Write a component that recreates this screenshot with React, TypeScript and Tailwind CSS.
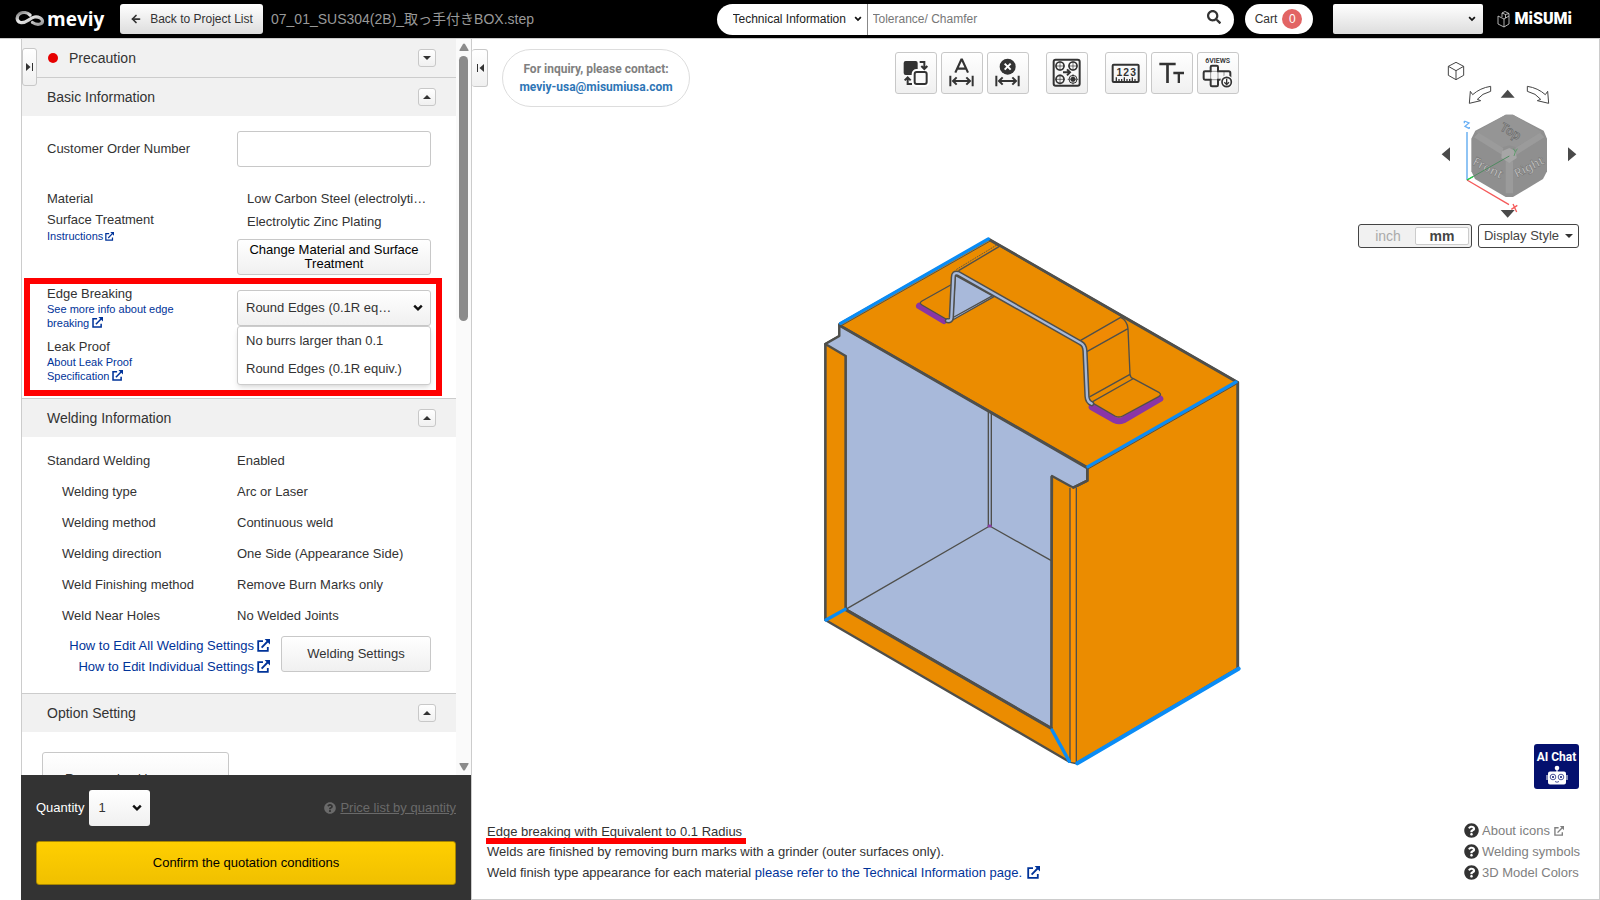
import React, { useState } from "react";
import { FaSearch, FaQuestionCircle } from "react-icons/fa";
import { ArrowLeft } from "lucide-react";

const FONT = "font-['Liberation_Sans','Noto_Sans_CJK_JP',sans-serif]";
const SOFT = "bg-linear-to-b from-white to-[#f0f0f0] border border-[#c8c8c8] rounded-[3px]";

function External({ className }: { className: string }) {
  return (
    <svg viewBox="0 0 13 13" className={className} fill="none" stroke="currentColor" strokeWidth="1.8" aria-hidden="true">
      <path d="M6 2.2H1.2v9.6h9.6V8" />
      <path d="M4.6 8.6L11 2" />
      <path d="M7.6 0H13v5.4z" fill="currentColor" stroke="none" />
    </svg>
  );
}

function Chevron({ className }: { className: string }) {
  return (
    <svg viewBox="0 0 10 8" className={className} fill="none" stroke="#111" strokeWidth="2.4" aria-hidden="true">
      <path d="M1.2 1.6L5 5.4l3.8-3.8" />
    </svg>
  );
}

function Triangle({ down }: { down?: boolean }) {
  return (
    <svg viewBox="0 0 8 4" className="h-1 w-2" fill="#333" aria-hidden="true">
      <path d={down ? "M0 0h8L4 4z" : "M0 4h8L4 0z"} />
    </svg>
  );
}

function SectionHeader({ title, open, alert, first }: { title: string; open: boolean; alert?: boolean; first?: boolean }) {
  return (
    <div className={`flex shrink-0 items-center bg-[#f1f1f1] pr-5 pl-[25px] ${first ? "h-[38px]" : "h-[39px] border-t border-[#ccc]"}`}>
      {alert && <span className="mr-[11px] ml-px size-[10px] rounded-full bg-[#e60000]" />}
      <h2 className="flex-1 text-[14px] leading-5">{title}</h2>
      <button aria-label={`Toggle ${title}`} className={`flex size-[18px] items-center justify-center ${SOFT} border-[#aaa]`}>
        <Triangle down={!open} />
      </button>
    </div>
  );
}

const DIM = (
  <g>
    <path d="M28 71v32M95 71v32" strokeWidth="6" />
    <path d="M36 87h51M47 76L36 87l11 11M76 76l11 11-11 11" strokeWidth="6" />
  </g>
);

const TOOLS: { name: string; gap?: boolean; icon: React.ReactNode }[] = [
  {
    name: "Swap faces",
    icon: (
      <g>
        <rect x="26" y="27" width="42" height="42" rx="6" fill="#333" stroke="none" />
        <rect x="57" y="58" width="40" height="40" rx="8" stroke="#fff" strokeWidth="14" fill="#fff" />
        <rect x="59" y="60" width="36" height="36" rx="6" fill="#fafafa" strokeWidth="6" />
        <path d="M74 30h14v20M79 42l9 9 9-9M51 96H38V76M29 85l9-9 9 9" strokeWidth="6" />
      </g>
    ),
  },
  { name: "Dimension", icon: <g><path d="M43 62L61 23h2l18 39M49 50h26" strokeWidth="6.500" />{DIM}</g> },
  {
    name: "Delete dimension",
    icon: (
      <g>
        <circle cx="62" cy="44" r="24" fill="#333" stroke="none" />
        <path d="M53 35l18 18M71 35L53 53" stroke="#fff" strokeWidth="6" />
        {DIM}
      </g>
    ),
  },
  {
    name: "Hole groups",
    gap: true,
    icon: (
      <g>
        <rect x="23" y="23" width="78" height="78" rx="6" strokeWidth="6" />
        <g strokeWidth="5">
          <circle cx="42" cy="42" r="12" /><circle cx="81" cy="42" r="12" /><circle cx="42" cy="82" r="12" />
          <circle cx="81" cy="82" r="12" strokeWidth="3" /><circle cx="81" cy="82" r="5" fill="#333" />
        </g>
        <path d="M42 27v30M27 42h30M81 27v30M66 42h30M42 67v30M27 82h30M81 66v32M65 82h32" strokeWidth="2" />
        <path d="M51 61h20M63 52l9 9-9 9" strokeWidth="6" />
      </g>
    ),
  },
  {
    name: "Measure",
    gap: true,
    icon: (
      <g>
        <rect x="23" y="38" width="78" height="52" rx="3" strokeWidth="6" />
        <path d="M34 89V76M42 89v-8M50 89v-8M58 89V76M66 89v-8M74 89v-8M82 89V76M90 89v-8" strokeWidth="4" />
        <g fontSize="31" fontWeight="700" fill="#333" stroke="none" textAnchor="middle" className="font-['Liberation_Sans']">
          <text x="43" y="72">1</text><text x="63" y="72">2</text><text x="84" y="72">3</text>
        </g>
      </g>
    ),
  },
  { name: "Text size", icon: <g><path d="M25 36h49M49.500 36v57" strokeWidth="8" /><path d="M67 63h32M83.500 63v30" strokeWidth="7" /></g> },
  {
    name: "Six views",
    icon: (
      <g>
        <text x="62" y="32" textAnchor="middle" fontSize="21" fontWeight="600" fill="#333" stroke="none" className="font-['Roboto']">6VIEWS</text>
        <path d="M45 41h14q4 0 4 4v13h32q5 0 5 5v16q0 4-5 4H63v16q0 4-4 4H45q-4 0-4-4V83H24q-4 0-4-4V62q0-4 4-4h17V45q0-4 4-4z" strokeWidth="6" />
        <path d="M41 58h22v25H41zM81 58v25" strokeWidth="1.500" />
        <circle cx="89" cy="90" r="20" fill="#fafafa" stroke="none" />
        <circle cx="89" cy="90" r="14" strokeWidth="5" />
        <path d="M89 80v17M82 91l7 7 7-7" strokeWidth="4" />
      </g>
    ),
  },
];

function Header() {
  return (
    <header className="flex h-[38px] shrink-0 items-center bg-black pr-7 pl-[15px]">
      <a href="#" aria-label="meviy home" className="flex w-[105px] items-center gap-[2px] text-white">
        <svg viewBox="0 0 30 16" className="h-4 w-[30px]" fill="none" aria-hidden="true">
          <defs>
            <linearGradient id="loop" x1="0" y1="0" x2="1" y2="1">
              <stop offset="0" stopColor="#777" /><stop offset=".4" stopColor="#eee" /><stop offset="1" stopColor="#999" />
            </linearGradient>
          </defs>
          <path d="M15 4C12 1 7.500.8 4.500 2.800c-3.500 2.700-3 7.700 1 8.700 5.500 1.300 9-4.500 14-5.500 4-.6 8 1.500 8 4.500-.2 3-5.500 4-10 1" stroke="url(#loop)" strokeWidth="3.200" strokeLinecap="round" />
        </svg>
        <span className="font-['Open_Sans',sans-serif] text-[19px] leading-6 font-bold">meviy</span>
      </a>
      <button className="flex h-[30px] w-[143px] items-center justify-center gap-2 rounded-[3px] bg-linear-to-b from-white to-[#ddd] text-[12px] text-[#333]">
        <ArrowLeft className="size-3" strokeWidth={3.500} />
        Back to Project List
      </button>
      <h1 className="ml-2 flex-1 text-[14px] leading-5 whitespace-nowrap text-[#999]">07_01_SUS304(2B)_取っ手付きBOX.step</h1>
      <form className="flex h-[31px] w-[517px] overflow-hidden rounded-full bg-white text-[12px]" onSubmit={(e) => e.preventDefault()}>
        <label className="relative flex w-[151px] items-center border-r border-[#888]">
          <select aria-label="Search category" className="size-full appearance-none pl-4 text-[#222]">
            <option>Technical Information</option>
          </select>
          <Chevron className="pointer-events-none absolute right-[5px] h-[6px] w-2" />
        </label>
        <input aria-label="Search" placeholder="Tolerance/ Chamfer" className="min-w-0 flex-1 pl-[5px] placeholder:text-[#777]" />
        <button aria-label="Search" className="flex w-10 items-center justify-center pb-1"><FaSearch className="size-[14px] text-[#333]" /></button>
      </form>
      <button className="ml-[11px] flex h-[30px] w-[68px] items-center justify-center gap-[5px] rounded-full bg-white text-[12px]">
        Cart <span className="flex size-5 items-center justify-center rounded-full bg-[#e26464] text-white">0</span>
      </button>
      <label className="relative ml-5 flex h-[30px] w-[150px] items-center">
        <select aria-label="Account" className="size-full appearance-none rounded-[2px] bg-linear-to-b from-white to-[#ddd]"><option></option></select>
        <Chevron className="pointer-events-none absolute right-[7px] h-[6px] w-2" />
      </label>
      <a href="#" aria-label="MISUMI" className="ml-[14px] flex items-center gap-1 text-white">
        <svg viewBox="0 0 14 17" className="h-[17px] w-[14px]" fill="none" stroke="#ddd" aria-hidden="true">
          <path d="M1 5l6 3v8l-6-3zM7 8l5-3v8l-5 3M5 6V2l3-1.500 4 2V5M5 2l3.500 1.500L12 2.500M8.500 3.500V7" strokeWidth=".8" />
        </svg>
        <span className="font-['Roboto',sans-serif] text-[16px] leading-5 font-black">MiSUMi</span>
      </a>
    </header>
  );
}

const WELDING = [
  ["Welding type", "Arc or Laser"],
  ["Welding method", "Continuous weld"],
  ["Welding direction", "One Side (Appearance Side)"],
  ["Weld Finishing method", "Remove Burn Marks only"],
  ["Weld Near Holes", "No Welded Joints"],
];

const EDGES = [
  { label: "No burrs larger than 0.1", short: "No burrs larger than 0.1" },
  { label: "Round Edges (0.1R equiv.)", short: "Round Edges (0.1R eq…" },
];

function Sidebar() {
  const [edge, setEdge] = useState(1);
  return (
    <aside className="relative ml-[21px] flex w-[450px] shrink-0 flex-col border-l border-[#ccc]">
      <button aria-label="Expand panel" className={`absolute top-[9px] left-0 z-10 flex h-[38px] w-[15px] items-center justify-center ${SOFT}`}>
        <svg viewBox="0 0 8 10" className="h-[10px] w-2" fill="#333" aria-hidden="true"><path d="M0 1v8l4.500-4zM6 1h1v8H6z" /></svg>
      </button>
      <div className="flex min-h-0 flex-1">
        <div className="flex min-w-0 flex-1 flex-col overflow-hidden text-[13px]">
          <SectionHeader title="Precaution" open={false} alert first />
          <SectionHeader title="Basic Information" open />
          <div className="pt-[15px] pb-[2px]">
            <div className="flex items-center pr-[25px] pl-[25px]">
              <label htmlFor="order" className="w-[190px]">Customer Order Number</label>
              <input id="order" className="h-9 w-[194px] rounded-[3px] border border-[#c8c8c8] px-2" />
            </div>
            <div className="mt-[22px] flex px-[25px] leading-5">
              <div className="w-[190px]">
                <p>Material</p>
                <p className="mt-px">Surface Treatment</p>
                <a href="#" className="flex items-center gap-[2px] text-[11px] leading-3 text-[#003399]">Instructions <External className="size-[9px]" /></a>
              </div>
              <div className="w-[194px]">
                <p className="pl-[10px] whitespace-nowrap">Low Carbon Steel (electrolyti…</p>
                <p className="mt-[3px] pl-[10px]">Electrolytic Zinc Plating</p>
                <button className={`mt-[7px] h-9 w-full px-2 leading-[14px] text-black ${SOFT}`}>Change Material and Surface Treatment</button>
              </div>
            </div>
            <div className="mt-[3px] ml-[2px] flex h-[118px] w-[418px] border-[6px] border-[#ff0000] pl-[17px]">
              <div className="w-[190px] pt-[2px] leading-4">
                <p id="edge-label">Edge Breaking</p>
                <a href="#" className="block w-[132px] text-[11px] leading-[14px] text-[#003399]">See more info about edge breaking <External className="inline-block size-[11px] align-[-1px]" /></a>
                <p className="mt-[9px]">Leak Proof</p>
                <a href="#" className="block w-[100px] text-[11px] leading-[14px] text-[#003399]">About Leak Proof Specification <External className="inline-block size-[11px] align-[-1px]" /></a>
              </div>
              <div className="relative w-[194px] pt-[6px]">
                <button aria-haspopup="listbox" aria-expanded="true" aria-labelledby="edge-label" className={`flex h-9 w-full items-center justify-between pr-[7px] pl-2 ${SOFT}`}>
                  <span className="whitespace-nowrap">{EDGES[edge].short}</span>
                  <Chevron className="h-2 w-[10px]" />
                </button>
                <ul role="listbox" className="absolute top-[42px] left-0 z-10 w-full rounded-[3px] border border-[#ccc] bg-white pt-px shadow-md">
                  {EDGES.map((o, i) => (
                    <li key={o.label} role="option" aria-selected={i === edge} onClick={() => setEdge(i)} className="h-7 pl-2 leading-[26px]">{o.label}</li>
                  ))}
                </ul>
              </div>
            </div>
          </div>
          <SectionHeader title="Welding Information" open />
          <div className="shrink-0 px-[25px] pt-2 pb-4">
            <dl className="grid grid-cols-[190px_1fr] leading-[31px]">
              <dt>Standard Welding</dt>
              <dd>Enabled</dd>
              {WELDING.map(([k, v]) => (
                <React.Fragment key={k}>
                  <dt className="pl-[15px]">{k}</dt>
                  <dd>{v}</dd>
                </React.Fragment>
              ))}
            </dl>
            <div className="mt-1 flex gap-[11px]">
              <div className="flex flex-1 flex-col items-end leading-[21px] text-[#003399]">
                <a href="#" className="flex items-center gap-[3px]">How to Edit All Welding Settings <External className="size-[13px]" /></a>
                <a href="#" className="flex items-center gap-[3px]">How to Edit Individual Settings <External className="size-[13px]" /></a>
              </div>
              <button className={`mt-px h-9 w-[150px] ${SOFT}`}>Welding Settings</button>
            </div>
          </div>
          <SectionHeader title="Option Setting" open />
          <div className="shrink-0 px-5 pt-5">
            <button className={`h-[54px] w-[187px] pl-[22px] text-left ${SOFT}`}>Remove backing</button>
          </div>
        </div>
        <div className="flex w-[15px] flex-col items-center bg-[#fafafa] pt-1 pb-1">
          <svg viewBox="0 0 10 8" className="h-2 w-[10px]" fill="#8b8b8b" aria-hidden="true"><path d="M1 8h8q1 0 .5-1L6 1Q5 0 4 1L.5 7Q0 8 1 8z" /></svg>
          <div className="mt-[5px] h-[265px] w-[9px] rounded-full bg-[#8b8b8b]" />
          <svg viewBox="0 0 10 8" className="mt-auto h-2 w-[10px]" fill="#8b8b8b" aria-hidden="true"><path d="M1 0h8q1 0 .5 1L6 7Q5 8 4 7L.5 1Q0 0 1 0z" /></svg>
        </div>
      </div>
      <div className="-ml-px shrink-0 bg-[#333] px-[15px] pt-[15px] pb-[15px] text-[13px]">
        <div className="flex items-center">
          <label htmlFor="qty" className="mr-[5px] text-white">Quantity</label>
          <div className="relative flex h-9 w-[61px] items-center">
            <select id="qty" className="size-full appearance-none rounded-[3px] bg-linear-to-b from-white to-[#f0f0f0] pl-[9px]"><option>1</option></select>
            <Chevron className="pointer-events-none absolute right-2 h-2 w-[10px]" />
          </div>
          <a href="#" className="ml-auto flex items-center gap-1 text-[#6a6a6a]"><FaQuestionCircle className="size-3" /><span className="underline">Price list by quantity</span></a>
        </div>
        <button className="mt-[15px] h-11 w-full rounded-[3px] border border-[#a88700] bg-linear-to-b from-[#ffcf00] to-[#f0c000] text-black">Confirm the quotation conditions</button>
      </div>
    </aside>
  );
}

function Model() {
  return (
    <svg viewBox="472 39 1127 860" className="absolute inset-0 size-full" fill="none" role="img" aria-label="3D model of a box with a handle">
      <g transform="translate(800 220) scale(.33333)" stroke="#4f4f4b" strokeLinejoin="round" strokeLinecap="round">
        <path d="M567 57L118 312v36l-42 24v828l732 425 22 5 484-285V487z" fill="#eb8c00" strokeWidth="7" />
        <path d="M118 315l744 427v40l-42 21-64-35-2 757-617-357V408l-61-36 42-24z" fill="#a8b9da" strokeWidth="7" />
        <path d="M810 803h19v825l-19-3z" fill="#fb9304" stroke="none" />
        <path d="M810 805v820M829 805v823" strokeWidth="4" />
        <path d="M565 573v345M574 578v340M569 918L137 1168M569 918l185 104" strokeWidth="4" />
        <path d="M820 803l42-21v-40" strokeWidth="8" />
        <path d="M567 918h4" stroke="#8a3fa0" strokeWidth="9" />
        <path d="M118 316L862 744M567 59L1312 487" strokeWidth="8" />
        <path d="M137 1169l617 356" strokeWidth="9" />
        <path d="M76 372v828M137 408v760M754 770v755M1312 487v858" strokeWidth="6" />
        <g stroke="#0a8cf5" strokeWidth="10">
          <path d="M122 310L565 57M864 740L1308 486M78 1200l57-32M756 1530l52 94" />
          <path d="M832 1630l484-284" strokeWidth="12" />
        </g>
        <path d="M124 317L569 64M866 746L1310 492" strokeWidth="3" />
        <path d="M358 258l74 44" stroke="#8a35a6" strokeWidth="20" />
        <path d="M452 195l-86 48q-10 6 0 12l72 42V195z" fill="#eb8c00" stroke="none" />
        <path d="M452 195l-86 48q-10 6 0 12l72 42" strokeWidth="4" />
        <path d="M480 155l117-75 365 212q20 10 22 34l6 137q2 12 10 15l78 42q12 7-2 14l-108 58q-11 6-23 0l-65-38-14-170-24-24z" fill="#eb8c00" stroke="none" />
        <path d="M842 361l120-69q20 10 22 34l-122 68z" fill="#f08a04" stroke="none" />
        <path d="M876 561l69 39q12 6 25 0l110-64" stroke="#8a35a6" strokeWidth="20" />
        <path d="M876 548l69 40q12 6 23 0l108-58 2-12-78-42-122 68z" fill="#eb8c00" stroke="none" />
        <path d="M876 548l69 40q12 6 23 0l108-58q10-6 2-12l-78-42q-9-3-10-13l-6-137q-2-24-22-34M842 361l120-69M862 394l122-68M870 530l120-67M878 545l120-68" strokeWidth="4" />
        <path d="M477 151l120-71" strokeWidth="4" />
        <path d="M470 148l122-74" strokeWidth="2.500" strokeDasharray="3 5" />
        <path d="M466 166l116 64-124 70z" fill="#a8b9da" strokeWidth="4" />
        <path d="M462 291l112-62" strokeWidth="4" />
        <path d="M442 302q11 2 12-8l6-122q0-16 14-12l368 209q12 6 13 24l6 136q1 16 14 22" strokeWidth="16" />
        <path d="M442 302q11 2 12-8l6-122q0-16 14-12l368 209q12 6 13 24l6 136q1 16 14 22" stroke="#a8b9da" strokeWidth="7" />
      </g>
    </svg>
  );
}

function ViewCube() {
  return (
    <svg viewBox="285 24 432 492" className="h-[164px] w-[144px]" fill="none" role="img" aria-label="View orientation cube">
      <g stroke="#444" strokeWidth="3" strokeLinejoin="round">
        <path d="M348 37l23 12v27l-23 13-23-13V49zM325 49l23 13 23-13M348 62v27" />
        <path d="M452 109v15q-26 6-40 24l10 4-34 8 3-36 7 10q22-20 54-25zM562 109v15q26 6 40 24l-10 4 34 8-3-36-7 10q-22-20-54-25z" />
      </g>
      <path d="M482 143h42l-21-24zM482 480h42l-21 23zM330 292v42l-25-21zM684 292v42l25-21z" fill="#4a4a4a" />
      <path d="M497 194h22l92 48 10 24v98l-12 23-90 54h-22l-92-54-11-23v-98l12-24z" fill="#8f8f8f" />
      <path d="M497 194h22l87 52-78 46-20-6-22 6-78-46z" fill="#959595" />
      <path d="M402 262l14-14 74 46-4 20zM613 262l-13-14-74 46 4 20zM497 334h22v96h-22z" fill="#9b9b9b" />
      <path d="M508 294l20 10 2 20-22 15-24-15 2-20z" fill="#a6a6a6" />
      <g className="font-['Noto_Sans']" fontSize="37" fontWeight="600" strokeWidth="1.500" textAnchor="middle">
        <text transform="translate(506 255) rotate(30)" fill="#999" stroke="#5f5f5f">Top</text>
        <text transform="translate(438 365) rotate(27)" fill="#c4c4c4" stroke="#707070">Front</text>
        <text transform="translate(573 362) rotate(-27)" fill="#c4c4c4" stroke="#707070">Right</text>
      </g>
      <path d="M381 390V246" stroke="#90c4f4" strokeWidth="6" />
      <path d="M381 390l126 74" stroke="#f55a5a" strokeWidth="4" />
      <path d="M381 390l127-72" stroke="#4f8a60" strokeWidth="3" />
      <path d="M381 390l18-10" stroke="#22cc44" strokeWidth="4" />
      <path d="M373 213l14 6-12 10 13 7M373 213v7M388 236v-5" stroke="#6ab0f5" strokeWidth="4" />
      <path d="M519 462l11 24M532 466l-18 12" stroke="#f55a5a" strokeWidth="4" />
      <path d="M520 296l6 10 6-10M526 306l-4 12" stroke="#5f9a6c" strokeWidth="3" />
    </svg>
  );
}

const HELP = ["About icons", "Welding symbols", "3D Model Colors"];

function Viewer() {
  return (
    <main className="relative flex min-w-0 flex-1 flex-col border border-[#ccc] border-t-0">
      <Model />
      <div className="relative flex items-start pr-5">
        <div className="flex flex-1 items-start pt-[10px]">
          <button aria-label="Collapse panel" className={`flex h-[38px] w-4 items-center justify-center ${SOFT} border-l-0`}>
            <svg viewBox="0 0 8 10" className="h-[10px] w-2" fill="#333" aria-hidden="true"><path d="M1 1h1v8H1zM8 1v8L3.500 5z" /></svg>
          </button>
          <p className="ml-[14px] flex h-[58px] w-[188px] flex-col justify-center rounded-full border border-[#ddd] bg-white text-center font-['Roboto',sans-serif] text-[12px] leading-[18px] font-bold text-[#808080]">
            For inquiry, please contact:
            <a href="#" className="text-[#2e75b6]">meviy-usa@misumiusa.com</a>
          </p>
        </div>
        <div className="flex gap-1 pt-[13px]">
          {TOOLS.map((t) => (
            <button key={t.name} aria-label={t.name} className={`size-[42px] ${SOFT} ${t.gap ? "ml-[13px]" : ""}`}>
              <svg viewBox="3 3 120 120" className="size-10" fill="none" stroke="#333" aria-hidden="true">{t.icon}</svg>
            </button>
          ))}
        </div>
        <div className="flex w-[340px] flex-col items-end pt-[19px]">
          <ViewCube />
          <div className="mt-[2px] flex gap-[6px] text-[#444]">
            <div className="flex h-6 w-[114px] rounded-[3px] border border-[#444] bg-[#f1f1f1] p-[2px] text-[14px] leading-[18px]">
              <button className="flex-1 text-[#aaa]">inch</button>
              <button className="w-[54px] rounded-[2px] border border-[#ccc] bg-white leading-4 font-bold">mm</button>
            </div>
            <button className="flex h-6 w-[101px] items-center justify-center gap-[6px] rounded-[3px] border border-[#444] bg-white text-[13px]">
              Display Style <Triangle down />
            </button>
          </div>
        </div>
      </div>
      <div className="relative mt-auto flex items-end justify-between pr-5 pb-4 pl-[15px] text-[13px]">
        <div className="leading-[21px]">
          <p><span className="relative">Edge breaking with Equivalent to 0.1 Radius<span className="absolute top-[14px] -right-1 -left-px h-[6px] bg-[#ff0000]" /></span></p>
          <p className="leading-5">Welds are finished by removing burn marks with a grinder (outer surfaces only).</p>
          <p>Weld finish type appearance for each material <a href="#" className="text-[#003399]">please refer to the Technical Information page. <External className="ml-px inline-block size-[13px] align-[-2px]" /></a></p>
        </div>
        <div className="flex flex-col items-end">
          <button className="mb-[31px] flex size-[45px] flex-col items-center rounded-[3px] bg-[#04106e] pt-[5px] text-white">
            <span className="font-['Roboto',sans-serif] text-[12px] leading-4 font-bold whitespace-nowrap">AI Chat</span>
            <svg viewBox="0 0 22 20" className="h-5 w-[22px]" fill="#fff" aria-hidden="true">
              <circle cx="11" cy="3" r="2.300" /><path d="M10.400 4h1.200v3h-1.200z" />
              <path d="M4 6.500h14q2 0 2 2v9q0 2-2 2H4q-2 0-2-2v-9q0-2 2-2zM.5 10h1v5h-1zM20.500 10h1v5h-1z" />
              <g fill="none" stroke="#04106e" strokeWidth=".7"><circle cx="7" cy="12" r="2.800" /><circle cx="15" cy="12" r="2.800" /><path d="M9 16.500q2 1.500 4 0" /></g>
              <circle cx="7" cy="12" r="1" fill="#04106e" /><circle cx="15" cy="12" r="1" fill="#04106e" />
            </svg>
          </button>
          <ul className="w-[115px] leading-[21px] text-[#808080]">
            {HELP.map((h, i) => (
              <li key={h}>
                <a href="#" className="flex items-center gap-[3px] whitespace-nowrap">
                  <FaQuestionCircle className="size-[15px] shrink-0 text-[#333]" />
                  {h}
                  {i === 0 && <External className="ml-px size-[10px]" />}
                </a>
              </li>
            ))}
          </ul>
        </div>
      </div>
    </main>
  );
}

export default function App() {
  return (
    <div className={`flex h-screen min-w-[1200px] flex-col bg-white text-[#333] ${FONT}`}>
      <Header />
      <div className="flex min-h-0 flex-1 border-t border-[#ccc]">
        <Sidebar />
        <Viewer />
      </div>
    </div>
  );
}
